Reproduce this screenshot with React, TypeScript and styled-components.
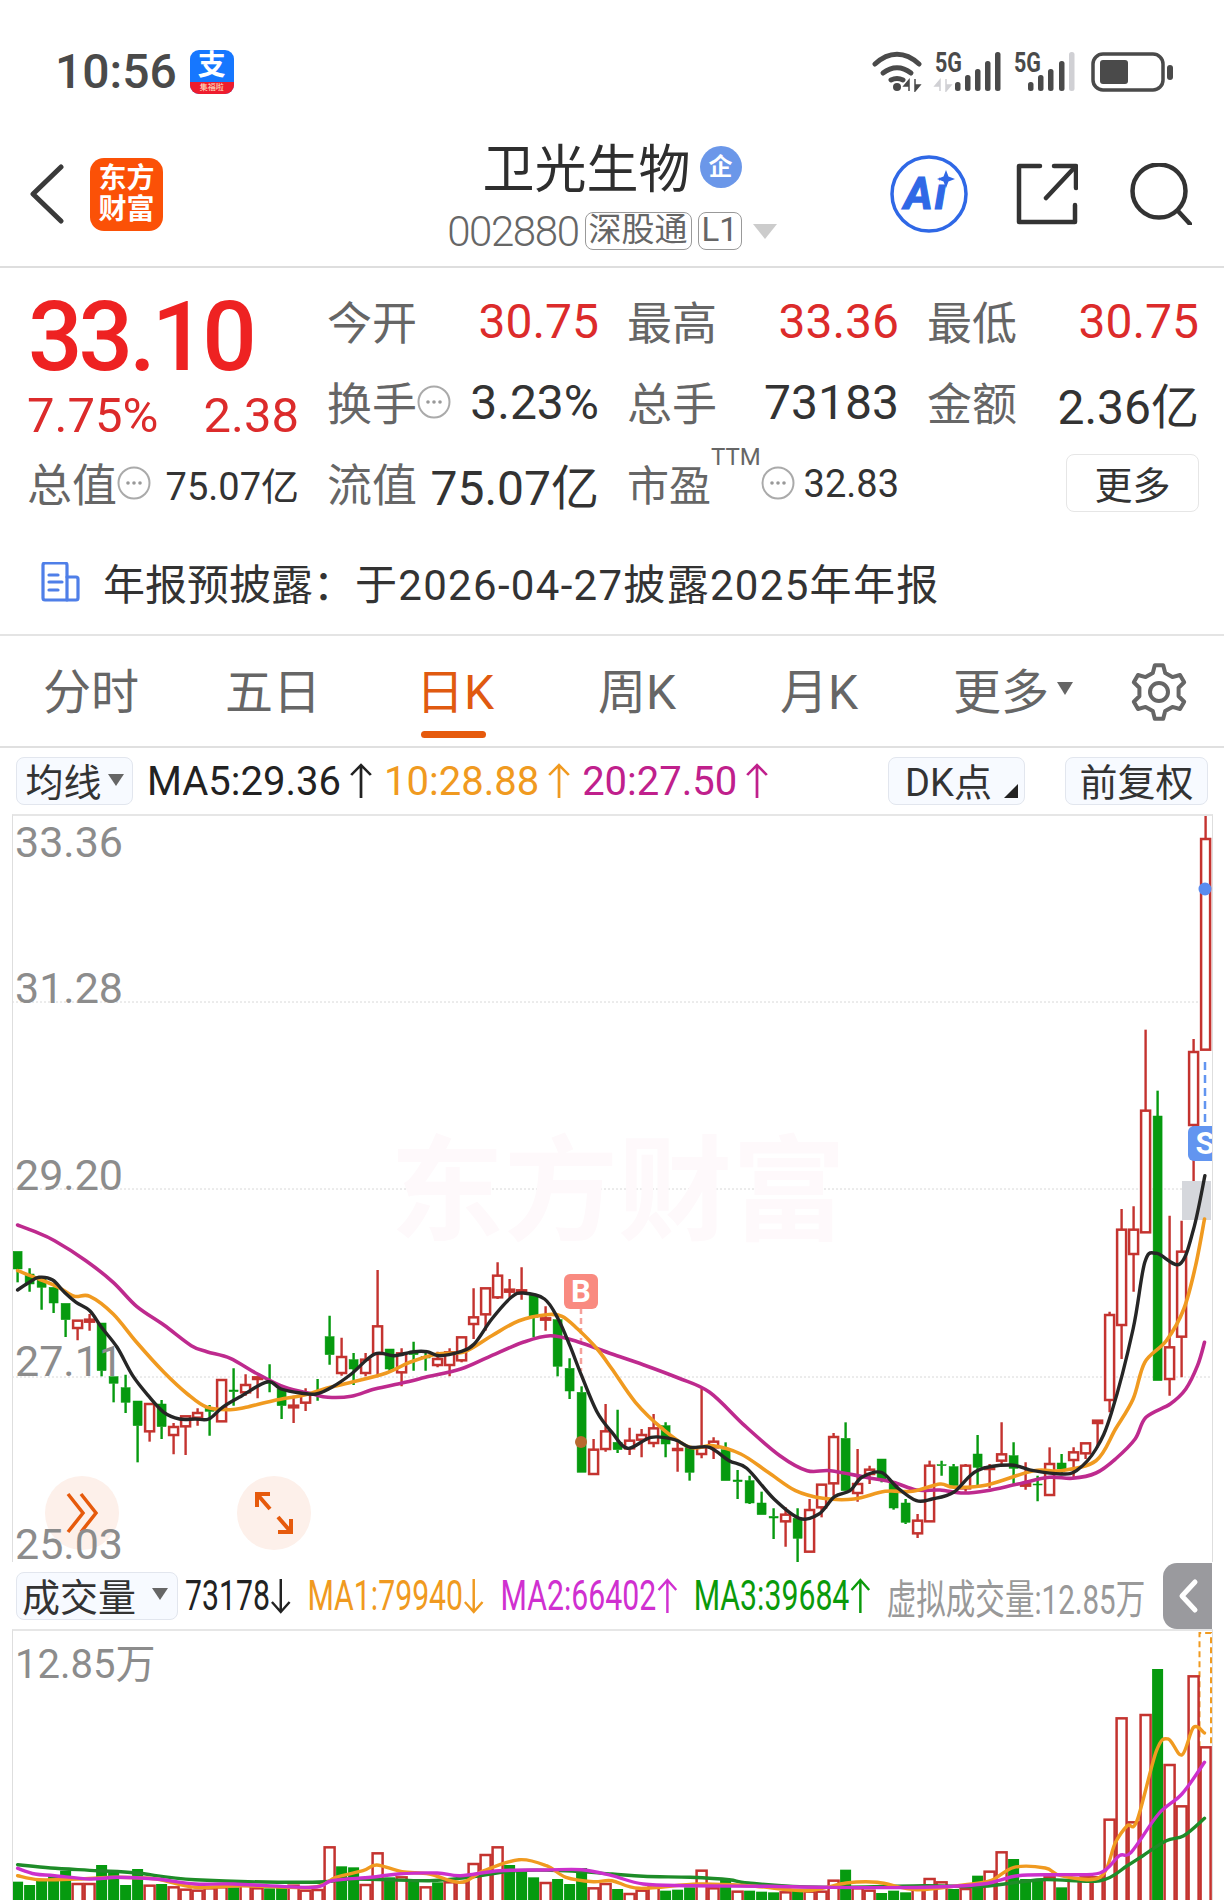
import React from 'react';
import styled, { createGlobalStyle } from 'styled-components';

const GlobalStyle = createGlobalStyle`
  html, body {
    margin: 0;
    padding: 0;
    background: #fff;
  }
  body {
    width: 1224px;
    height: 1901px;
    overflow: hidden;
    font-family: Roboto, "Noto Sans CJK SC", "Noto Sans", sans-serif;
    color: #333;
  }
`;

const RED = '#c4332f';
const GREEN = '#069a0f';

const Page = styled.div`
  width: 1224px;
  height: 1901px;
  overflow: hidden;
  background: #fff;
`;

/* status bar */
const StatusBar = styled.div`
  height: 125px;
  display: flex;
  align-items: flex-start;
  justify-content: space-between;
  padding: 50px 50px 0 55px;
  box-sizing: border-box;
`;

const StatusLeft = styled.div`
  display: flex;
  align-items: center;
  gap: 13px;
  height: 44px;
`;

const Clock = styled.span`
  font-size: 48px;
  font-weight: 500;
  line-height: 44px;
  color: #4a4a4a;
`;

const AlipayIcon = styled.div`
  width: 44px;
  height: 44px;
  border-radius: 9px;
  overflow: hidden;
  background: #1677ff;
  display: flex;
  flex-direction: column;
`;

const AlipayGlyph = styled.span`
  height: 32px;
  line-height: 32px;
  text-align: center;
  font-size: 28px;
  font-weight: 700;
  color: #fff;
`;

const AlipayStrip = styled.span`
  height: 12px;
  line-height: 12px;
  text-align: center;
  font-size: 8px;
  color: #ffe9c8;
  background: #ee1c2e;
`;

const StatusIconSlot = styled.div`
  margin-top: -8px;
`;

/* nav bar */
const NavBar = styled.div`
  height: 141px;
  display: grid;
  grid-template-columns: 1fr auto 1fr;
  align-items: center;
  border-bottom: 2px solid #dedede;
`;

const NavLeft = styled.div`
  display: flex;
  align-items: center;
  gap: 25px;
  padding: 0 0 3px 29px;
`;

const Logo = styled.div`
  width: 73px;
  height: 73px;
  border-radius: 14px;
  background: #fb5107;
  color: #fff;
  font-size: 28px;
  font-weight: 700;
  line-height: 31px;
  text-align: center;
  display: flex;
  align-items: center;
  justify-content: center;
`;

const NavCenter = styled.div`
  display: flex;
  flex-direction: column;
  align-items: center;
  padding-bottom: 4px;
`;

const TitleRow = styled.div`
  display: flex;
  align-items: center;
  gap: 9px;
  height: 56px;
`;

const Title = styled.span`
  font-size: 52px;
  color: #2e2e2e;
`;

const VerifiedBadge = styled.span`
  width: 42px;
  height: 42px;
  margin-top: 3px;
  border-radius: 50%;
  background: #6b97e9;
  color: #fff;
  font-size: 24px;
  font-weight: 700;
  line-height: 42px;
  text-align: center;
`;

const CodeRow = styled.div`
  display: flex;
  align-items: center;
  gap: 6px;
  margin-top: 19px;
  height: 38px;
`;

const StockCode = styled.span`
  font-size: 42px;
  font-weight: 300;
  letter-spacing: -1.4px;
  color: #666;
`;

const CodeTag = styled.span`
  height: 36px;
  line-height: 34px;
  padding: 0 3px;
  border: 1.5px solid #999;
  border-radius: 8px;
  font-size: 33px;
  color: #666;
`;

const CodeCaret = styled.span`
  width: 0;
  height: 0;
  margin-left: 5px;
  border-left: 12px solid transparent;
  border-right: 12px solid transparent;
  border-top: 15px solid #ccc;
`;

const NavRight = styled.div`
  display: flex;
  align-items: center;
  justify-content: flex-end;
  padding: 0 32px 4px 0;
  gap: 48px;
`;

/* quote */
const QuoteGrid = styled.div`
  display: grid;
  grid-template-columns: repeat(4, 272px);
  grid-auto-rows: 81px;
  column-gap: 28px;
  padding: 12px 0 0 27px;
`;

const Cell = styled.div`
  display: flex;
  align-items: center;
  justify-content: space-between;
`;

const PriceCell = styled.div`
  font-size: 96px;
  font-weight: 500;
  letter-spacing: -4px;
  line-height: 81px;
  padding: 17px 0 0 1px;
  color: #ee2222;
`;

const ChangeCell = styled(Cell)`
  padding-top: 27px;
  font-size: 49px;
  color: #dc2b2b;
`;

const Label = styled.span`
  display: flex;
  align-items: center;
  font-size: 45px;
  color: #666;
`;

const SmallLabel = styled(Label)`
  font-size: 42px;
`;

const Ttm = styled.sup`
  align-self: flex-start;
  font-size: 24px;
  line-height: 22px;
  margin-top: -6px;
  color: #666;
`;

const Value = styled.span<{ $up?: boolean; $small?: boolean }>`
  padding-top: 2px;
  font-size: ${({ $small }) => ($small ? 38 : 48)}px;
  color: ${({ $up }) => ($up ? '#dc2b2b' : '#333')};
  white-space: nowrap;
`;

const MoreButton = styled.button`
  width: 133px;
  height: 58px;
  margin-left: auto;
  padding: 0;
  background: #fff;
  border: 1.5px solid #e6e6e6;
  border-radius: 8px;
  font-family: inherit;
  font-size: 38px;
  color: #333;
`;

const Notice = styled.div`
  height: 113px;
  display: flex;
  align-items: center;
  gap: 23px;
  padding: 6px 0 0 41px;
  box-sizing: border-box;
  border-bottom: 2px solid #e4e4e4;
  font-size: 42px;
  color: #333;
`;

const NoticeDate = styled.span`
  letter-spacing: 1.3px;
`;

/* period tabs */
const Tabs = styled.div`
  height: 110px;
  display: grid;
  grid-template-columns: repeat(6, 182px) 1fr;
  align-items: center;
  border-bottom: 2px solid #e0e0e0;
`;

const Tab = styled.div<{ $active?: boolean }>`
  position: relative;
  display: flex;
  align-items: center;
  justify-content: center;
  gap: 8px;
  height: 110px;
  box-sizing: border-box;
  padding-bottom: 6px;
  font-size: 48px;
  color: ${({ $active }) => ($active ? '#e05a10' : '#666')};
  ${({ $active }) =>
    $active &&
    `
    &::after {
      content: '';
      position: absolute;
      left: 57px;
      bottom: 8px;
      width: 65px;
      height: 7px;
      border-radius: 4px;
      background: #e65a0c;
    }
  `}
`;

const MoreTab = styled(Tab)`
  padding-left: 24px;
`;

const SmallCaret = styled.span`
  width: 0;
  height: 0;
  border-left: 8px solid transparent;
  border-right: 8px solid transparent;
  border-top: 13px solid #666;
`;

const GearSlot = styled.div`
  display: flex;
  padding: 2px 0 0 39px;
`;

/* indicator rows */
const IndicatorRow = styled.div<{ $height: number }>`
  height: ${({ $height }) => $height}px;
  display: flex;
  align-items: center;
  padding-left: 16px;
  box-sizing: border-box;
`;

const Chip = styled.div<{ $width: number }>`
  width: ${({ $width }) => $width}px;
  height: 48px;
  flex: none;
  box-sizing: border-box;
  padding-bottom: 3px;
  display: flex;
  align-items: center;
  justify-content: center;
  gap: 6px;
  position: relative;
  background: #f7faff;
  border: 1.5px solid #e2e6ee;
  border-radius: 8px;
  font-size: 38px;
  color: #333;
`;

const VolumeChip = styled(Chip)`
  justify-content: flex-start;
  padding-left: 5px;
  gap: 16px;
`;

const DkChip = styled(Chip)`
  padding-right: 16px;
`;

const ChipCaret = styled.span`
  width: 0;
  height: 0;
  border-left: 8px solid transparent;
  border-right: 8px solid transparent;
  border-top: 12px solid #666;
`;

const CornerMark = styled.span`
  position: absolute;
  right: 6px;
  bottom: 6px;
  width: 0;
  height: 0;
  border-left: 14px solid transparent;
  border-bottom: 14px solid #222;
`;

const MaGroup = styled.div`
  display: flex;
  align-items: center;
  gap: 11px;
  margin-left: 14px;
  font-size: 40px;
`;

const MaText = styled.span<{ $color: string; $gap?: number; $size?: number }>`
  display: flex;
  align-items: center;
  gap: ${({ $gap }) => $gap ?? 8}px;
  color: ${({ $color }) => $color};
  ${({ $size }) => $size && `font-size: ${$size}px;`}
  white-space: nowrap;
`;

const Spacer = styled.div`
  flex: 1;
`;

const ChipRight = styled(Chip)`
  margin-left: 40px;
  margin-right: 16px;
`;

const CondensedStats = styled.div`
  display: flex;
  align-items: center;
  flex: none;
  width: 1330px;
  margin-left: 7px;
  margin-right: -372px;
  gap: 22px;
  font-size: 42px;
  transform: scaleX(0.72);
  transform-origin: left center;
`;

const CollapseTab = styled.div`
  width: 49px;
  height: 66px;
  margin-left: auto;
  margin-right: 12px;
  align-self: flex-end;
  flex: none;
  display: flex;
  align-items: center;
  justify-content: center;
  background: #9a9a9e;
  border-radius: 14px 0 0 14px;
`;

/* charts */
const ChartPanel = styled.div<{ $height: number }>`
  position: relative;
  width: 1199px;
  height: ${({ $height }) => $height}px;
  margin-left: 12px;
  overflow: hidden;
  border-top: 2px solid #e6e6e6;
  border-left: 1px solid #dedede;
  border-right: 1px solid #dedede;
`;

const ChartSvg = styled.svg`
  display: block;
`;

const AxisLabel = styled.span<{ $top: number }>`
  position: absolute;
  left: 2px;
  top: ${({ $top }) => $top}px;
  font-size: 43px;
  line-height: 36px;
  color: #8c8c8c;
`;

const VolumeLabel = styled(AxisLabel)`
  font-size: 40px;
`;

const Watermark = styled.div`
  position: absolute;
  left: 377px;
  top: 314px;
  font-size: 114px;
  line-height: 124px;
  font-weight: 700;
  color: #fef9fb;
  white-space: nowrap;
`;

const RoundButton = styled.div<{ $left: number }>`
  position: absolute;
  left: ${({ $left }) => $left}px;
  top: 660px;
  width: 74px;
  height: 74px;
  border-radius: 50%;
  background: #fdf0ea;
  display: flex;
  align-items: center;
  justify-content: center;
`;

const TradeMarker = styled.div<{ $left: number; $top: number; $bg: string }>`
  position: absolute;
  left: ${({ $left }) => $left}px;
  top: ${({ $top }) => $top}px;
  width: 34px;
  height: 35px;
  border-radius: 6px;
  background: ${({ $bg }) => $bg};
  color: #fff;
  font-size: 31px;
  font-weight: 700;
  line-height: 35px;
  text-align: center;
`;

/* chart data: y values are read off the picture, 3 units per pixel from y=1200 */
type Candle = [number, number, number, number, 'r' | 'g'];

const candles: Candle[] = [
  [157, 157, 210, 250, 'g'], [208, 225, 255, 278, 'g'], [235, 240, 265, 332, 'g'], [265, 265, 312, 342, 'g'],
  [313, 313, 362, 414, 'g'], [363, 365, 387, 424, 'r'], [345, 362, 368, 395, 'r'], [372, 372, 515, 532, 'g'],
  [533, 533, 553, 610, 'g'], [527, 566, 610, 642, 'g'], [606, 606, 680, 790, 'g'], [615, 615, 697, 728, 'r'],
  [603, 615, 683, 720, 'g'], [672, 684, 708, 766, 'r'], [652, 652, 682, 768, 'r'], [628, 642, 656, 680, 'r'],
  [618, 625, 637, 710, 'g'], [543, 543, 667, 667, 'r'], [508, 573, 578, 620, 'g'], [526, 558, 580, 590, 'r'],
  [533, 535, 540, 598, 'r'], [496, 548, 553, 580, 'g'], [560, 570, 620, 660, 'g'], [590, 620, 625, 672, 'r'],
  [568, 585, 611, 636, 'r'], [540, 578, 584, 605, 'g'], [350, 413, 467, 497, 'g'], [416, 474, 522, 530, 'r'],
  [462, 482, 510, 558, 'g'], [462, 482, 522, 532, 'r'], [213, 382, 465, 535, 'r'], [450, 450, 510, 520, 'g'],
  [448, 463, 520, 562, 'r'], [428, 462, 467, 515, 'g'], [455, 472, 477, 515, 'g'], [458, 480, 498, 505, 'r'],
  [448, 460, 498, 532, 'r'], [415, 415, 484, 490, 'r'], [268, 355, 375, 420, 'r'], [268, 268, 346, 395, 'r'],
  [190, 230, 295, 300, 'r'], [240, 272, 278, 300, 'r'], [205, 274, 280, 302, 'r'], [287, 287, 355, 415, 'g'],
  [322, 358, 362, 395, 'r'], [362, 362, 502, 532, 'g'], [478, 508, 576, 600, 'g'], [562, 580, 820, 820, 'g'],
  [720, 752, 825, 825, 'r'], [615, 697, 750, 758, 'r'],
  [632, 730, 752, 762, 'g'], [686, 725, 748, 768, 'r'], [690, 708, 722, 775, 'r'], [645, 688, 732, 745, 'r'],
  [670, 680, 735, 775, 'g'], [720, 750, 753, 818, 'r'], [745, 745, 820, 845, 'g'], [570, 745, 765, 778, 'r'],
  [715, 728, 745, 780, 'r'], [730, 752, 845, 845, 'g'], [813, 843, 848, 900, 'g'], [830, 845, 912, 915, 'g'],
  [878, 912, 947, 947, 'g'], [928, 952, 957, 1020, 'g'], [925, 947, 967, 1043, 'r'], [928, 958, 1018, 1092, 'g'],
  [900, 933, 1058, 1058, 'r'], [857, 857, 925, 955, 'r'], [702, 714, 853, 890, 'r'], [670, 718, 875, 875, 'g'],
  [750, 855, 882, 908, 'r'], [800, 812, 825, 855, 'r'], [780, 780, 845, 850, 'g'], [850, 850, 927, 932, 'g'],
  [900, 912, 970, 975, 'g'], [945, 965, 1003, 1017, 'r'], [785, 800, 967, 967, 'r'], [785, 797, 800, 830, 'g'],
  [795, 803, 860, 862, 'g'], [795, 800, 868, 878, 'r'], [708, 765, 805, 860, 'g'], [795, 805, 810, 868, 'r'],
  [670, 766, 785, 800, 'r'], [730, 770, 808, 855, 'g'], [790, 855, 860, 872, 'r'], [830, 855, 858, 907, 'g'],
  [745, 795, 888, 888, 'r'], [765, 792, 810, 825, 'g'], [745, 760, 783, 835, 'r'], [733, 733, 763, 780, 'r'],
  [665, 665, 672, 745, 'r'], [338, 348, 603, 640, 'r'], [30, 92, 378, 480, 'r'], [22, 92, 165, 278, 'r'],
  [-508, -265, 100, 100, 'r'], [-325, -249, 545, 545, 'g'], [50, 445, 540, 590, 'r'], [65, 158, 413, 535, 'r'],
  [-480, -441, -222, -54, 'r'], [-1149, -1080, -448, -448, 'r'],
];

const greenVolume = new Set([
  0, 1, 2, 3, 4, 7, 8, 9, 10, 12, 18, 21, 22, 27, 28, 31, 33, 35, 41, 42, 43, 45, 46, 47, 50, 54, 55, 56, 59, 61, 62,
  63, 65, 69, 72, 73, 74, 78, 80, 83, 84, 85, 87, 95,
]);

const volumeTops = [
  938, 948, 935, 920, 905, 945, 945, 888, 910, 948, 900, 950, 945, 955, 962, 965, 958, 955, 955, 950,
  958, 958, 955, 950, 965, 963, 835, 892, 895, 948, 853, 925, 925, 935, 955, 940, 940, 940, 885, 858,
  835, 888, 905, 925, 942, 930, 945, 897, 958, 945, 960, 975, 965, 955, 965, 962, 955, 905, 958, 930,
  968, 965, 968, 970, 970, 965, 968, 968, 935, 902, 958, 965, 972, 965, 970, 960, 930, 940, 960, 960,
  920, 908, 850, 870, 930, 932, 925, 955, 935, 925, 925, 752, 448, 760, 438, 300, 588, 712, 322, 535,
];

type Pt = [number, number];

// second half of each line was read from the right crop, so x is shifted by half a page
const join = (left: Pt[], right: Pt[]): Pt[] => [...left, ...right.map(([x, y]): Pt => [x + 1568, y])];

const ma5 = join(
  [[45, 273], [75, 250], [100, 235], [135, 243], [165, 280], [195, 310], [230, 335], [260, 385], [300, 445], [340, 530], [380, 590], [420, 640], [460, 660], [500, 660], [535, 660], [570, 625], [620, 590], [685, 548], [720, 570], [770, 582], [810, 585], [850, 565], [900, 525], [960, 465], [1010, 470], [1060, 458], [1095, 458], [1125, 470], [1180, 458], [1215, 435], [1260, 360], [1310, 295], [1340, 282], [1395, 300], [1430, 360], [1460, 440], [1490, 530], [1530, 640]],
  [[0, 700], [40, 748], [100, 715], [160, 722], [200, 745], [250, 745], [300, 785], [345, 808], [415, 900], [480, 958], [530, 945], [570, 893], [610, 875], [640, 835], [690, 820], [730, 865], [780, 905], [820, 900], [875, 880], [935, 815], [1020, 798], [1080, 815], [1150, 825], [1190, 815], [1240, 750], [1280, 640], [1335, 390], [1365, 190], [1395, 163], [1455, 195], [1490, 90], [1519, -70]],
);

const ma10 = join(
  [[45, 215], [100, 240], [150, 265], [190, 292], [230, 292], [290, 345], [350, 430], [420, 520], [480, 585], [530, 625], [590, 632], [630, 625], [700, 605], [780, 588], [830, 570], [900, 550], [990, 522], [1050, 490], [1120, 465], [1190, 458], [1260, 410], [1330, 365], [1400, 347], [1440, 352], [1480, 390], [1530, 450]],
  [[0, 510], [60, 610], [130, 690], [200, 745], [260, 740], [330, 765], [400, 820], [470, 875], [540, 898], [620, 900], [700, 877], [770, 877], [840, 855], [875, 865], [960, 858], [1080, 815], [1150, 815], [1240, 785], [1290, 690], [1335, 600], [1365, 490], [1420, 425], [1465, 330], [1495, 200], [1518, 60]],
);

const ma20 = join(
  [[45, 78], [90, 98], [140, 125], [220, 185], [290, 250], [350, 322], [420, 378], [490, 440], [530, 458], [590, 478], [660, 525], [730, 565], [800, 585], [840, 595], [900, 592], [960, 570], [1030, 552], [1090, 535], [1180, 510], [1250, 475], [1340, 430], [1410, 410], [1480, 428]],
  [[0, 465], [80, 497], [170, 537], [250, 580], [340, 680], [430, 770], [500, 815], [560, 815], [650, 835], [720, 850], [780, 873], [840, 873], [900, 882], [960, 875], [1040, 855], [1120, 835], [1180, 838], [1240, 822], [1290, 780], [1340, 720], [1368, 655], [1430, 615], [1470, 570], [1500, 500], [1518, 430]],
);

const vol1 = join(
  [[45, 920], [100, 932], [200, 930], [300, 925], [400, 930], [500, 955], [620, 950], [800, 955], [860, 925], [930, 905], [965, 888], [1030, 908], [1100, 915], [1180, 940], [1240, 905], [1330, 872], [1400, 890], [1450, 925], [1520, 938]],
  [[0, 935], [70, 958], [220, 945], [350, 950], [500, 965], [600, 942], [680, 940], [780, 962], [900, 948], [970, 935], [1030, 895], [1110, 897], [1150, 920], [1250, 925], [1290, 820], [1320, 770], [1345, 755], [1395, 545], [1425, 510], [1460, 558], [1490, 475], [1518, 492]],
);

const vol2 = join(
  [[45, 898], [90, 915], [140, 920], [230, 930], [300, 925], [400, 930], [500, 945], [600, 945], [800, 955], [850, 935], [950, 925], [1020, 915], [1120, 912], [1180, 920], [1280, 905], [1400, 903], [1490, 902]],
  [[0, 920], [80, 945], [200, 950], [400, 952], [550, 955], [800, 955], [950, 945], [1040, 920], [1150, 917], [1250, 912], [1300, 860], [1330, 850], [1400, 735], [1460, 675], [1518, 580]],
);

const vol3 = join(
  [[45, 887], [130, 897], [250, 905], [350, 912], [500, 932], [800, 940], [900, 930], [1100, 935], [1200, 925], [1320, 905], [1450, 905]],
  [[0, 915], [80, 922], [200, 925], [300, 932], [350, 942], [530, 955], [800, 950], [950, 952], [1100, 932], [1250, 935], [1320, 890], [1360, 860], [1420, 815], [1465, 800], [1518, 748]],
);

const candleX = (i: number) => 17.6 + 12 * i;
const priceY = (z: number) => 1200 + z / 3;
const volumeY = (z: number) => 1570 + z / 3;

function smoothPath(points: Pt[], toY: (z: number) => number) {
  const pts = points.map(([x, y]): Pt => [x / 2.562, toY(y)]);
  let d = `M${pts[0][0].toFixed(1)} ${pts[0][1].toFixed(1)}`;
  for (let i = 0; i < pts.length - 1; i++) {
    const p0 = pts[Math.max(i - 1, 0)];
    const p1 = pts[i];
    const p2 = pts[i + 1];
    const p3 = pts[Math.min(i + 2, pts.length - 1)];
    const c1x = p1[0] + (p2[0] - p0[0]) / 6;
    const c1y = p1[1] + (p2[1] - p0[1]) / 6;
    const c2x = p2[0] - (p3[0] - p1[0]) / 6;
    const c2y = p2[1] - (p3[1] - p1[1]) / 6;
    d += `C${c1x.toFixed(1)} ${c1y.toFixed(1)} ${c2x.toFixed(1)} ${c2y.toFixed(1)} ${p2[0].toFixed(1)} ${p2[1].toFixed(1)}`;
  }
  return d;
}

function gearPath(cx: number, cy: number, outer: number, inner: number, teeth: number) {
  const step = (Math.PI * 2) / teeth;
  const pts: string[] = [];
  for (let i = 0; i < teeth; i++) {
    const a = -Math.PI / 2 + step * i;
    const offsets: [number, number][] = [
      [-0.3, inner],
      [-0.15, outer],
      [0.15, outer],
      [0.3, inner],
    ];
    offsets.forEach(([o, r]) => {
      const t = a + step * o;
      pts.push(`${(cx + r * Math.cos(t)).toFixed(1)} ${(cy + r * Math.sin(t)).toFixed(1)}`);
    });
  }
  return `M${pts.join('L')}Z`;
}

/* icons */
function BackIcon() {
  return (
    <svg width="36" height="60" viewBox="0 0 36 60" fill="none">
      <path d="M32 3 4 30l28 27" stroke="#3a3a3a" strokeWidth="5" strokeLinecap="round" strokeLinejoin="round" />
    </svg>
  );
}

function AiIcon() {
  return (
    <svg width="78" height="78" viewBox="0 0 78 78" fill="none">
      <circle cx="39" cy="39" r="37" stroke="#2f68e6" strokeWidth="3.5" />
      <text x="14" y="54" fontFamily="Roboto, sans-serif" fontSize="44" fontWeight="700" fontStyle="italic" letterSpacing="2" fill="#2f68e6" stroke="#2f68e6" strokeWidth="1.2">
        Ai
      </text>
      <rect x="50" y="16" width="14" height="13" fill="#fff" />
      <path d="M56 15l2.500 6.500L65 24l-6.500 2.500L56 33l-2.500-6.500L47 24l6.500-2.500z" fill="#2f68e6" />
    </svg>
  );
}

function ShareIcon() {
  return (
    <svg width="62" height="62" viewBox="-2 0 62 62" fill="none" stroke="#333" strokeWidth="4.500" strokeLinecap="round" strokeLinejoin="round">
      <path d="M22 3H1v56h56V42" />
      <path d="M36 3h22v22" />
      <path d="M57 4 28 35" />
    </svg>
  );
}

function SearchIcon() {
  return (
    <svg width="66" height="62" viewBox="-4 0 66 62" fill="none" stroke="#333" strokeWidth="4.500" strokeLinecap="round">
      <circle cx="29" cy="28" r="26.500" />
      <path d="m48 48 12 13" />
    </svg>
  );
}

function InfoDots() {
  return (
    <svg width="34" height="34" viewBox="0 0 34 34" fill="none">
      <circle cx="17" cy="17" r="15.500" stroke="#aaa" strokeWidth="2" />
      <circle cx="11" cy="17" r="1.800" fill="#999" />
      <circle cx="17" cy="17" r="1.800" fill="#999" />
      <circle cx="23" cy="17" r="1.800" fill="#999" />
    </svg>
  );
}

function ReportIcon() {
  return (
    <svg width="39" height="40" viewBox="0 0 39 40" fill="none" stroke="#4f7fe8" strokeWidth="3.200" strokeLinejoin="round" strokeLinecap="round">
      <path d="M2 3a2 2 0 0 1 2-2h20a2 2 0 0 1 2 2v35H4a2 2 0 0 1-2-2z" />
      <path d="M26 15h9a2 2 0 0 1 2 2v19a2 2 0 0 1-2 2h-9" />
      <path d="M8 13h9M8 20h13M8 28h9" />
    </svg>
  );
}

function GearIcon() {
  return (
    <svg width="56" height="58" viewBox="0 0 56 58" fill="none" stroke="#666" strokeWidth="4" strokeLinejoin="round">
      <path d={gearPath(28, 29, 27, 20, 6)} />
      <circle cx="28" cy="29" r="9" />
    </svg>
  );
}

function ValueArrow({ color, down, width = 24 }: { color: string; down?: boolean; width?: number }) {
  return (
    <svg width={width} height="36" viewBox="0 0 22 36" preserveAspectRatio="none" fill="none" stroke={color} strokeWidth="2.500" style={{ transform: down ? 'rotate(180deg)' : undefined }}>
      <path d="M11 35V2M2 12l9-10 9 10" />
    </svg>
  );
}

const signalBars = (bars: [number, number, string][]) =>
  bars.map(([x, h, fill]) => <rect key={x} x={x} y={39 - h} width="5.500" height={h} rx="2.500" fill={fill} />);

function StatusIcons() {
  const ink = '#4a4a4a';
  const faint = '#d0d0d4';
  return (
    <svg width="302" height="50" viewBox="0 -10 302 50" fill="none">
      <g stroke={ink} strokeWidth="5" strokeLinecap="round">
        <path d="M3 12C17 -1 33 -1 47 12" />
        <path d="M11 21c9-7 19-7 28 0" />
        <path d="M19 28c4-2 8-2 12 0" />
      </g>
      <circle cx="25" cy="35" r="4" fill={ink} />
      <path d="M37 39V28l-5 6h5M43 27v12l5-6h-5" fill={ink} stroke={ink} strokeWidth="1.500" />
      <text x="63" y="20" fontFamily="Roboto, sans-serif" fontSize="27" fontWeight="700" fill={ink} textLength="27" lengthAdjust="spacingAndGlyphs">5G</text>
      <path d="M68 39V28l-5 6h5M74 27v12l5-6h-5" fill={faint} stroke={faint} strokeWidth="1.500" />
      {signalBars([[83, 9, ink], [93, 16, ink], [103, 22, ink], [113, 30, ink], [123, 39, ink]])}
      <text x="142" y="20" fontFamily="Roboto, sans-serif" fontSize="27" fontWeight="700" fill={ink} textLength="27" lengthAdjust="spacingAndGlyphs">5G</text>
      {signalBars([[156, 9, ink], [166, 16, ink], [176, 22, ink], [187, 30, ink], [197, 39, faint]])}
      <rect x="221" y="2" width="70" height="36" rx="10" stroke={ink} strokeWidth="3.500" />
      <rect x="228" y="8" width="28" height="24" rx="3" fill={ink} />
      <rect x="295" y="13" width="6" height="15" rx="3" fill={ink} />
    </svg>
  );
}

function Candles() {
  return (
    <>
      {candles.map(([high, top, bottom, low, kind], i) => {
        const x = candleX(i);
        const color = kind === 'r' ? RED : GREEN;
        const yTop = priceY(top);
        const yBottom = priceY(bottom);
        return (
          <g key={i} stroke={color}>
            <path d={`M${x} ${priceY(high)}V${yTop}M${x} ${yBottom}V${priceY(low)}`} strokeWidth="2.400" />
            {kind === 'r' ? (
              <rect x={x - 4.5} y={yTop} width="9" height={yBottom - yTop} fill="#fff" strokeWidth="2.500" />
            ) : (
              <rect x={x - 4.500} y={yTop} width="9" height={yBottom - yTop} fill={color} strokeWidth="0.500" />
            )}
          </g>
        );
      })}
    </>
  );
}

function PriceChart() {
  return (
    <ChartSvg width="1199" height="746" viewBox="13 817 1199 746" fill="none">
      {[1003, 1190, 1378].map((y) => (
        <path key={y} d={`M12 ${y}H1212`} stroke="#d8d8d8" strokeWidth="1" strokeDasharray="2 2" />
      ))}
      <rect x="1182" y="1182" width="29" height="39" fill="#d5d7dc" />
      <path d="M581 1309V1372" stroke="#f5a09a" strokeWidth="2.500" strokeDasharray="6 4" />
      <path d="M1205 1063V1127" stroke="#6295f0" strokeWidth="2.500" strokeDasharray="8 5" />
      <Candles />
      <path d={smoothPath(ma20, priceY)} stroke="#be2a8e" strokeWidth="3.600" strokeLinecap="round" />
      <path d={smoothPath(ma10, priceY)} stroke="#f09a20" strokeWidth="3.600" strokeLinecap="round" />
      <path d={smoothPath(ma5, priceY)} stroke="#262626" strokeWidth="3.400" strokeLinecap="round" />
      <circle cx="581" cy="1443" r="6" fill="#b9692f" />
      <circle cx="1205" cy="890" r="6.500" fill="#5a8cf0" />
    </ChartSvg>
  );
}

function VolumeChart() {
  return (
    <ChartSvg width="1199" height="269" viewBox="13 1632 1199 269" fill="none">
      <path d={`M1199.500 ${volumeY(535)}V1634H1211V${volumeY(535)}`} stroke="#f09a20" strokeWidth="2" strokeDasharray="6 4" />
      {volumeTops.map((top, i) => {
        const x = candleX(i);
        const y = volumeY(top);
        return greenVolume.has(i) ? (
          <rect key={i} x={x - 5.500} y={y} width="11" height={1910 - y} fill={GREEN} />
        ) : (
          <rect key={i} x={x - 5} y={y} width="10" height={1910 - y} fill="#fff" stroke={RED} strokeWidth="2.500" />
        );
      })}
      <path d={smoothPath(vol3, volumeY)} stroke="#1e8c28" strokeWidth="3.400" strokeLinecap="round" />
      <path d={smoothPath(vol1, volumeY)} stroke="#f09a20" strokeWidth="3.400" strokeLinecap="round" />
      <path d={smoothPath(vol2, volumeY)} stroke="#cc30cc" strokeWidth="3.400" strokeLinecap="round" />
    </ChartSvg>
  );
}

export default function App() {
  return (
    <Page>
      <GlobalStyle />
      <StatusBar>
        <StatusLeft>
          <Clock>10:56</Clock>
          <AlipayIcon>
            <AlipayGlyph>支</AlipayGlyph>
            <AlipayStrip>集福啦</AlipayStrip>
          </AlipayIcon>
        </StatusLeft>
        <StatusIconSlot>
          <StatusIcons />
        </StatusIconSlot>
      </StatusBar>

      <NavBar>
        <NavLeft>
          <BackIcon />
          <Logo>
            东方
            <br />
            财富
          </Logo>
        </NavLeft>
        <NavCenter>
          <TitleRow>
            <Title>卫光生物</Title>
            <VerifiedBadge>企</VerifiedBadge>
          </TitleRow>
          <CodeRow>
            <StockCode>002880</StockCode>
            <CodeTag>深股通</CodeTag>
            <CodeTag>L1</CodeTag>
            <CodeCaret />
          </CodeRow>
        </NavCenter>
        <NavRight>
          <AiIcon />
          <ShareIcon />
          <SearchIcon />
        </NavRight>
      </NavBar>

      <QuoteGrid>
        <PriceCell>33.10</PriceCell>
        <Cell>
          <Label>今开</Label>
          <Value $up>30.75</Value>
        </Cell>
        <Cell>
          <Label>最高</Label>
          <Value $up>33.36</Value>
        </Cell>
        <Cell>
          <Label>最低</Label>
          <Value $up>30.75</Value>
        </Cell>

        <ChangeCell>
          <span>7.75%</span>
          <span>2.38</span>
        </ChangeCell>
        <Cell>
          <Label>
            换手
            <InfoDots />
          </Label>
          <Value>3.23%</Value>
        </Cell>
        <Cell>
          <Label>总手</Label>
          <Value>73183</Value>
        </Cell>
        <Cell>
          <Label>金额</Label>
          <Value>2.36亿</Value>
        </Cell>

        <Cell>
          <Label>
            总值
            <InfoDots />
          </Label>
          <Value $small>75.07亿</Value>
        </Cell>
        <Cell>
          <Label>流值</Label>
          <Value>75.07亿</Value>
        </Cell>
        <Cell>
          <SmallLabel>
            市盈
            <Ttm>TTM</Ttm>
            <InfoDots />
          </SmallLabel>
          <Value $small>32.83</Value>
        </Cell>
        <Cell>
          <MoreButton>更多</MoreButton>
        </Cell>
      </QuoteGrid>

      <Notice>
        <ReportIcon />
        <span>
          年报预披露：
          <NoticeDate>于2026-04-27披露2025年年报</NoticeDate>
        </span>
      </Notice>

      <Tabs>
        <Tab>分时</Tab>
        <Tab>五日</Tab>
        <Tab $active>日K</Tab>
        <Tab>周K</Tab>
        <Tab>月K</Tab>
        <MoreTab>
          更多
          <SmallCaret />
        </MoreTab>
        <GearSlot>
          <GearIcon />
        </GearSlot>
      </Tabs>

      <IndicatorRow $height={66}>
        <Chip $width={117}>
          均线
          <ChipCaret />
        </Chip>
        <MaGroup>
          <MaText $color="#222">
            MA5:29.36
            <ValueArrow color="#222" />
          </MaText>
          <MaText $color="#f09a20">
            10:28.88
            <ValueArrow color="#f09a20" />
          </MaText>
          <MaText $color="#c0208c">
            20:27.50
            <ValueArrow color="#c0208c" />
          </MaText>
        </MaGroup>
        <Spacer />
        <DkChip $width={137}>
          DK点
          <CornerMark />
        </DkChip>
        <ChipRight $width={143}>前复权</ChipRight>
      </IndicatorRow>

      <ChartPanel $height={746}>
        <Watermark>东方财富</Watermark>
        <PriceChart />
        <AxisLabel $top={8}>33.36</AxisLabel>
        <AxisLabel $top={154}>31.28</AxisLabel>
        <AxisLabel $top={341}>29.20</AxisLabel>
        <AxisLabel $top={527}>27.11</AxisLabel>
        <RoundButton $left={32}>
          <svg width="34" height="44" viewBox="0 0 34 44" fill="none" stroke="#e65a0c" strokeWidth="3.500">
            <path d="M3 3l15 19L3 41M16 3l15 19-15 19" />
          </svg>
        </RoundButton>
        <RoundButton $left={224}>
          <svg width="40" height="44" viewBox="0 0 40 44" fill="none" stroke="#e65a0c" strokeWidth="4">
            <path d="M3 16V3h13M3 3l13 15M37 28v13H24M37 41 24 26" />
          </svg>
        </RoundButton>
        <AxisLabel $top={710}>25.03</AxisLabel>
        <TradeMarker $left={551} $top={458} $bg="#f98a80">B</TradeMarker>
        <TradeMarker $left={1175} $top={310} $bg="#6295f0">S</TradeMarker>
      </ChartPanel>

      <IndicatorRow $height={67}>
        <VolumeChip $width={162}>
          成交量
          <ChipCaret />
        </VolumeChip>
        <CondensedStats>
          <MaText $color="#222" $gap={0}>
            73178
            <ValueArrow color="#222" down width={30} />
          </MaText>
          <MaText $color="#f09a20" $gap={0}>
            MA1:79940
            <ValueArrow color="#f09a20" down width={30} />
          </MaText>
          <MaText $color="#d030d0" $gap={0}>
            MA2:66402
            <ValueArrow color="#d030d0" width={30} />
          </MaText>
          <MaText $color="#0a9a0a" $gap={0}>
            MA3:39684
            <ValueArrow color="#0a9a0a" width={30} />
          </MaText>
          <MaText $color="#999" $size={41}>虚拟成交量:12.85万</MaText>
        </CondensedStats>
        <CollapseTab>
          <svg width="22" height="36" viewBox="0 0 22 36" fill="none" stroke="#fff" strokeWidth="5" strokeLinecap="round" strokeLinejoin="round">
            <path d="M18 4 5 18l13 14" />
          </svg>
        </CollapseTab>
      </IndicatorRow>

      <ChartPanel $height={269}>
        <VolumeChart />
        <VolumeLabel $top={16}>12.85万</VolumeLabel>
      </ChartPanel>
    </Page>
  );
}
